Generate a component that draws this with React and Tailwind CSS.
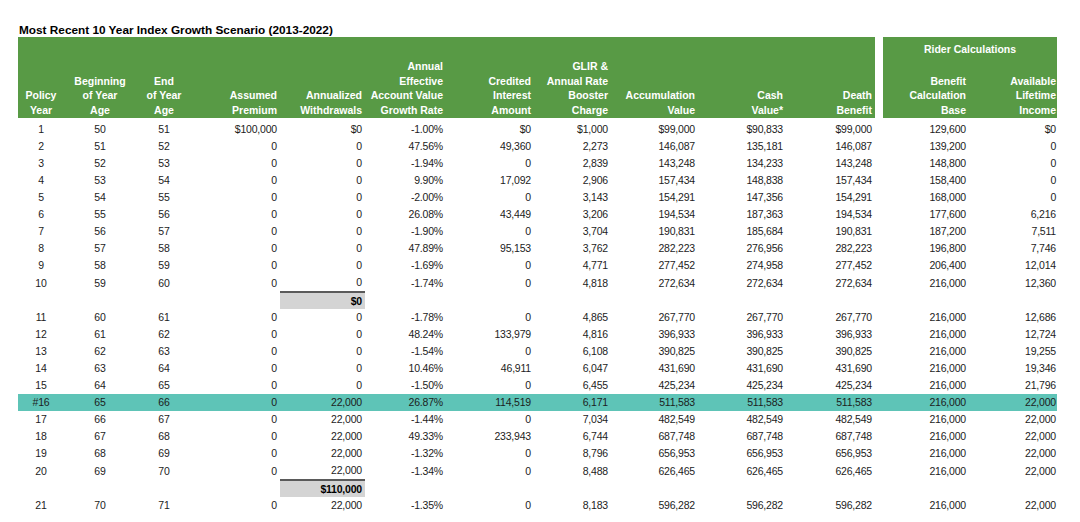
import React from 'react';

// 列幅（左ブロック11列 + 隙間 + ライダー2列）
const widths = [46, 72, 56, 88, 85, 81, 88, 77, 87, 88, 89, 8, 86, 88];

const headers = [
    { lines: ['Policy', 'Year'], center: true },
    { lines: ['Beginning', 'of Year', 'Age'], center: true },
    { lines: ['End', 'of Year', 'Age'], center: true },
    { lines: ['Assumed', 'Premium'] },
    { lines: ['Annualized', 'Withdrawals'] },
    { lines: ['Annual', 'Effective', 'Account Value', 'Growth Rate'] },
    { lines: ['Credited', 'Interest', 'Amount'] },
    { lines: ['GLIR &', 'Annual Rate', 'Booster', 'Charge'] },
    { lines: ['Accumulation', 'Value'] },
    { lines: ['Cash', 'Value*'] },
    { lines: ['Death', 'Benefit'] },
];

const rows = [
    ['1', '50', '51', '$100,000', '$0', '-1.00%', '$0', '$1,000', '$99,000', '$90,833', '$99,000', '129,600', '$0'],
    ['2', '51', '52', '0', '0', '47.56%', '49,360', '2,273', '146,087', '135,181', '146,087', '139,200', '0'],
    ['3', '52', '53', '0', '0', '-1.94%', '0', '2,839', '143,248', '134,233', '143,248', '148,800', '0'],
    ['4', '53', '54', '0', '0', '9.90%', '17,092', '2,906', '157,434', '148,838', '157,434', '158,400', '0'],
    ['5', '54', '55', '0', '0', '-2.00%', '0', '3,143', '154,291', '147,356', '154,291', '168,000', '0'],
    ['6', '55', '56', '0', '0', '26.08%', '43,449', '3,206', '194,534', '187,363', '194,534', '177,600', '6,216'],
    ['7', '56', '57', '0', '0', '-1.90%', '0', '3,704', '190,831', '185,684', '190,831', '187,200', '7,511'],
    ['8', '57', '58', '0', '0', '47.89%', '95,153', '3,762', '282,223', '276,956', '282,223', '196,800', '7,746'],
    ['9', '58', '59', '0', '0', '-1.69%', '0', '4,771', '277,452', '274,958', '277,452', '206,400', '12,014'],
    ['10', '59', '60', '0', '0', '-1.74%', '0', '4,818', '272,634', '272,634', '272,634', '216,000', '12,360'],
    { subtotal: '$0' },
    ['11', '60', '61', '0', '0', '-1.78%', '0', '4,865', '267,770', '267,770', '267,770', '216,000', '12,686'],
    ['12', '61', '62', '0', '0', '48.24%', '133,979', '4,816', '396,933', '396,933', '396,933', '216,000', '12,724'],
    ['13', '62', '63', '0', '0', '-1.54%', '0', '6,108', '390,825', '390,825', '390,825', '216,000', '19,255'],
    ['14', '63', '64', '0', '0', '10.46%', '46,911', '6,047', '431,690', '431,690', '431,690', '216,000', '19,346'],
    ['15', '64', '65', '0', '0', '-1.50%', '0', '6,455', '425,234', '425,234', '425,234', '216,000', '21,796'],
    ['#16', '65', '66', '0', '22,000', '26.87%', '114,519', '6,171', '511,583', '511,583', '511,583', '216,000', '22,000'],
    ['17', '66', '67', '0', '22,000', '-1.44%', '0', '7,034', '482,549', '482,549', '482,549', '216,000', '22,000'],
    ['18', '67', '68', '0', '22,000', '49.33%', '233,943', '6,744', '687,748', '687,748', '687,748', '216,000', '22,000'],
    ['19', '68', '69', '0', '22,000', '-1.32%', '0', '8,796', '656,953', '656,953', '656,953', '216,000', '22,000'],
    ['20', '69', '70', '0', '22,000', '-1.34%', '0', '8,488', '626,465', '626,465', '626,465', '216,000', '22,000'],
    { subtotal: '$110,000' },
    ['21', '70', '71', '0', '22,000', '-1.35%', '0', '8,183', '596,282', '596,282', '596,282', '216,000', '22,000'],
];

export default function App() {
    return (
        <div className="bg-white min-h-[522px] pl-[18px] pt-[23px] text-[#1c1c1c]" style={{ fontFamily: '"Liberation Sans", Arial, sans-serif' }}>
            <div className="text-[11.8px] font-bold leading-[14px] text-black pl-px">
                Most Recent 10 Year Index Growth Scenario (2013-2022)
            </div>
            <table className="table-fixed border-collapse w-[1039px]">
                <colgroup>
                    {widths.map((w, i) => (
                        <col key={i} style={{ width: w }} />
                    ))}
                </colgroup>
                <thead>
                    <tr className="h-[24px]">
                        {headers.map((h, i) => (
                            <th
                                key={i}
                                rowSpan={2}
                                className={`bg-[#589a45] text-white font-bold text-[10.5px] leading-[14.5px] align-bottom pb-[1px] p-0 ${h.center ? 'text-center' : 'text-right pr-[3px]'}`}
                            >
                                {h.lines.map((l, j) => (
                                    <div key={j} className="whitespace-nowrap">{l}</div>
                                ))}
                            </th>
                        ))}
                        <th rowSpan={2} className="bg-white p-0" />
                        <th colSpan={2} className="bg-[#589a45] text-white font-bold text-[10.5px] leading-[14.5px] text-center align-middle p-0 pt-[1px]">
                            Rider Calculations
                        </th>
                    </tr>
                    <tr className="h-[57px]">
                        <th className="bg-[#589a45] text-white font-bold text-[10.5px] leading-[14.5px] text-right align-bottom p-0 pr-[3px] pb-[1px]">
                            <div>Benefit</div>
                            <div>Calculation</div>
                            <div>Base</div>
                        </th>
                        <th className="bg-[#589a45] text-white font-bold text-[10.5px] leading-[14.5px] text-right align-bottom p-0 pr-[1px] pb-[1px]">
                            <div>Available</div>
                            <div>Lifetime</div>
                            <div>Income</div>
                        </th>
                    </tr>
                </thead>
                <tbody className="text-[10.5px] tracking-[-0.2px]">
                    <tr className="h-[3px]">
                        <td colSpan={14} className="p-0" />
                    </tr>
                    {rows.map((r, i) => {
                        if (!Array.isArray(r)) {
                            return (
                                <tr key={i} className="h-[17px]">
                                    <td colSpan={4} className="p-0" />
                                    <td className="p-0 pr-[3px] text-right font-bold leading-[15px] bg-[#d4d4d4] border-t-2 border-[#5a5a5a] text-black">
                                        {r.subtotal}
                                    </td>
                                    <td colSpan={9} className="p-0" />
                                </tr>
                            );
                        }
                        const hi = r[0] === '#16';
                        const cells = [...r.slice(0, 11), null, ...r.slice(11)];
                        return (
                            <tr key={i} className={`h-[17px] ${hi ? 'bg-[#5ec4b7]' : ''}`}>
                                {cells.map((c, j) => (
                                    <td
                                        key={j}
                                        className={`p-0 leading-[17px] whitespace-nowrap ${j < 3 ? 'text-center' : j === 13 ? 'text-right pr-[1px]' : 'text-right pr-[3px]'}`}
                                    >
                                        {c}
                                    </td>
                                ))}
                            </tr>
                        );
                    })}
                </tbody>
            </table>
        </div>
    );
}
